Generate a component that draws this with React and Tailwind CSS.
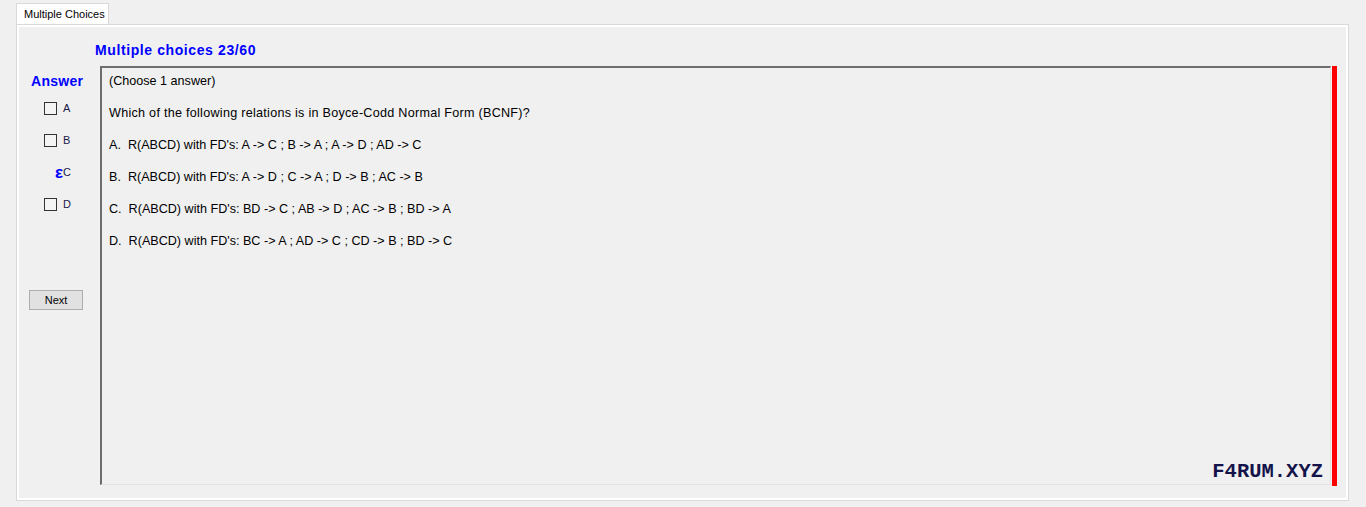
import React from "react";

const options = [
  "A.  R(ABCD) with FD's: A -> C ; B -> A ; A -> D ; AD -> C",
  "B.  R(ABCD) with FD's: A -> D ; C -> A ; D -> B ; AC -> B",
  "C.  R(ABCD) with FD's: BD -> C ; AB -> D ; AC -> B ; BD -> A",
  "D.  R(ABCD) with FD's: BC -> A ; AD -> C ; CD -> B ; BD -> C",
];

function Choice({ label, marked }) {
  return (
    <div className="h-[32px] flex items-center">
      {marked ? (
        <span className="ml-[38px] w-[8px] font-bold text-[17px] text-[#0000ff] leading-none">ε</span>
      ) : (
        <span className="ml-[27px] w-[13px] h-[13px] border border-[#333] bg-[#f4f4f4]" />
      )}
      <span className={`${marked ? "ml-0" : "ml-[6px]"} text-[11px] text-[#1a1a4a]`}>{label}</span>
    </div>
  );
}

export default function App() {
  return (
    <div
      className="w-[1366px] h-[507px] bg-[#f0f0f0] overflow-hidden"
      style={{ fontFamily: '"Liberation Sans", Arial, sans-serif' }}
    >
      <div className="pl-[16px] pt-[3px] flex">
        <div className="h-[21px] w-[93px] pl-[7px] bg-white border border-b-0 border-[#d9d9d9] text-[11px] text-black flex items-center">
          Multiple Choices
        </div>
      </div>
      <div className="ml-[16px] w-[1333px] h-[477px] border border-[#d9d9d9] shadow-[inset_0_0_0_2px_#ffffff] flex flex-col">
        <div className="h-[41px] pl-[78px] pt-[17px] font-bold text-[14px] tracking-[0.6px] text-[#0000ff] leading-[16px]">
          Multiple choices 23/60
        </div>
        <div className="flex h-[420px]">
          <div className="w-[83px] flex flex-col">
            <div className="pl-[14px] mt-[5px] h-[20px] font-bold text-[14px] tracking-[0.3px] text-[#0000ff] leading-[20px]">
              Answer
            </div>
            <div className="mt-[1px]">
              <Choice label="A" />
              <Choice label="B" />
              <Choice label="C" marked />
              <Choice label="D" />
            </div>
            <button className="ml-[12px] mt-[70px] w-[54px] h-[20px] bg-[#e1e1e1] border border-[#adadad] text-[11px] text-black">
              Next
            </button>
          </div>
          <div className="w-[1231px] h-[419px] border-l-2 border-t-2 border-[#6d6d6d] border-r border-b border-r-[#e3e3e3] border-b-[#e3e3e3] flex flex-col">
            <div className="flex-1 pl-[7px] text-[12.6px] text-black">
              <div className="h-[26px] flex items-center">(Choose 1 answer)</div>
              <div className="mt-[3px] h-[32px] flex items-center tracking-[0.27px]">
                Which of the following relations is in Boyce-Codd Normal Form (BCNF)?
              </div>
              {options.map((o) => (
                <div key={o} className="h-[32px] flex items-center whitespace-pre">
                  {o}
                </div>
              ))}
            </div>
            <div className="flex justify-end pr-[7px]">
              <span
                className="font-bold text-[20.5px] text-[#14144a] leading-[24px]"
                style={{ fontFamily: '"Liberation Mono", "DejaVu Sans Mono", monospace' }}
              >
                F4RUM.XYZ
              </span>
            </div>
          </div>
          <div className="ml-[1px] w-[5px] h-[420px] bg-[#ff0000]" />
        </div>
      </div>
    </div>
  );
}
